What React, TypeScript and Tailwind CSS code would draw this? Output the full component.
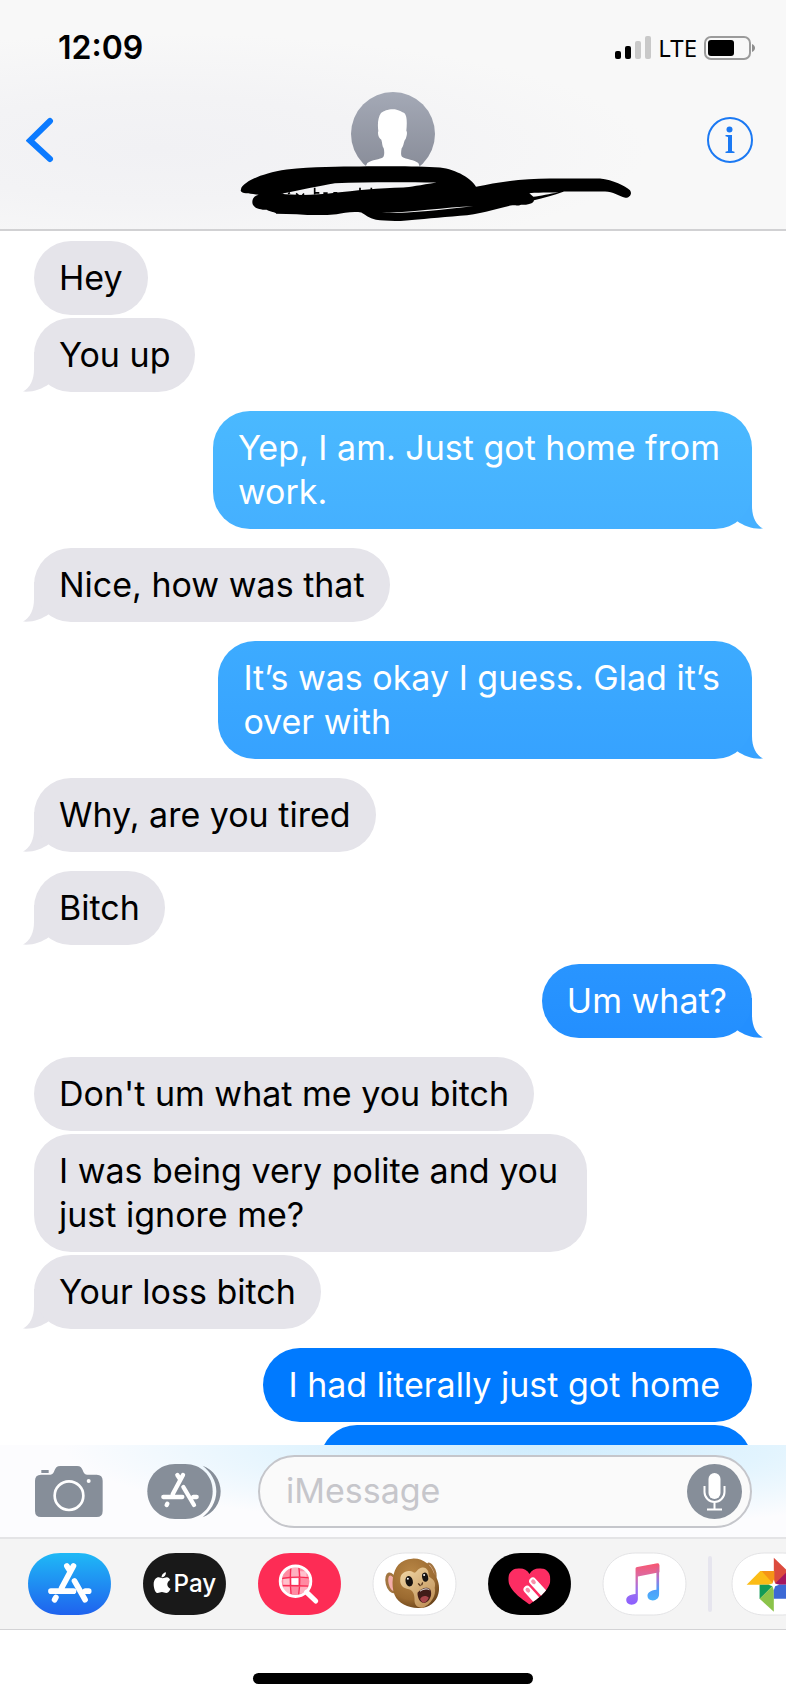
import type { ReactNode } from "react";

type Message = {
  text: string;
  from: "them" | "me";
  tail?: boolean;
  wide?: boolean;
  fill?: string;
  tailColor?: string;
};

const messages: Message[] = [
  { from: "them", text: "Hey" },
  { from: "them", text: "You up", tail: true },
  {
    from: "me",
    text: "Yep, I am. Just got home from\nwork.",
    tail: true,
    wide: true,
    fill: "bg-linear-to-b from-[#4ab9ff] to-[#45b0ff]",
    tailColor: "text-[#45b0ff]",
  },
  { from: "them", text: "Nice, how was that", tail: true },
  {
    from: "me",
    text: "It’s was okay I guess. Glad it’s\nover with",
    tail: true,
    wide: true,
    fill: "bg-linear-to-b from-[#3dabff] to-[#36a2ff]",
    tailColor: "text-[#36a2ff]",
  },
  { from: "them", text: "Why, are you tired", tail: true },
  { from: "them", text: "Bitch", tail: true },
  {
    from: "me",
    text: "Um what?",
    tail: true,
    fill: "bg-linear-to-b from-[#2995ff] to-[#238fff]",
    tailColor: "text-[#238fff]",
  },
  { from: "them", text: "Don't um what me you bitch" },
  { from: "them", text: "I was being very polite and you just ignore me?" },
  { from: "them", text: "Your loss bitch", tail: true },
  { from: "me", text: "I had literally just got home", wide: true, fill: "bg-[#007aff]" },
  { from: "me", text: "", fill: "bg-[#007aff]" },
];

function Bubble({ message, first }: { message: Message; first: boolean }) {
  const mine = message.from === "me";
  const color = mine ? `${message.fill} text-white` : "bg-[#e5e4ea] text-black";
  const width = message.text ? "" : "w-[432px]";
  const padding = message.wide ? "pr-8" : "pr-[25px]";
  return (
    <li className={`flex shrink-0 ${mine ? "justify-end" : "justify-start"} ${first ? "mt-[19px]" : "mt-[3px]"}`}>
      <div className="relative isolate flex max-w-[77%]">
        {message.tail && (
          <svg
            viewBox="0 0 40 40"
            aria-hidden="true"
            className={`absolute bottom-0 -z-10 size-10 ${
              mine ? `-right-[11px] -scale-x-100 ${message.tailColor}` : "-left-[11px] text-[#e5e4ea]"
            }`}
          >
            <path fill="currentColor" d="M11 0V17C11 28 7 36 0 39.6C10 40.4 19 37 26 32L34 20V0Z" />
          </svg>
        )}
        <p
          className={`min-h-[74px] rounded-[37px] py-[15px] pl-[25px] text-[34px] leading-[44px] whitespace-pre-line ${padding} ${color} ${width}`}
        >
          {message.text}
        </p>
      </div>
    </li>
  );
}

function StatusBar() {
  return (
    <div className="flex items-center justify-between pr-[30px] pl-[58px] pt-7">
      <span className="text-[32px] leading-10 font-semibold">12:09</span>
      <div className="flex items-center gap-[7px]">
        <svg width="36" height="24" viewBox="0 0 36 24" aria-label="Signal">
          <rect x="0" y="15" width="6" height="8" rx="2" />
          <rect x="10" y="10" width="6" height="13" rx="2" />
          <rect x="20" y="5" width="6" height="18" rx="2" fill="#c9c9c9" />
          <rect x="30" y="0" width="6" height="23" rx="2" fill="#c9c9c9" />
        </svg>
        <span className="font-['Noto_Sans',sans-serif] text-[24px] leading-8">LTE</span>
        <svg width="52" height="24" viewBox="0 0 52 24" aria-label="Battery">
          <rect x="1" y="1" width="45" height="22" rx="6" fill="none" stroke="#9b9b9b" strokeWidth="2" />
          <rect x="4" y="4" width="26" height="16" rx="3" />
          <path d="M48 8c4 1.500 4 6.500 0 8z" fill="#8e8e8e" />
        </svg>
      </div>
    </div>
  );
}

function Avatar() {
  return (
    <svg width="84" height="84" viewBox="392 35 252 252" aria-label="Contact photo">
      <defs>
        <linearGradient id="avatar" x1="0" y1="0" x2="0" y2="1">
          <stop offset="0" stopColor="#a4a9b6" />
          <stop offset="1" stopColor="#868a96" />
        </linearGradient>
        <clipPath id="avatar-clip">
          <circle cx="518" cy="161" r="126" />
        </clipPath>
      </defs>
      <circle cx="518" cy="161" r="126" fill="url(#avatar)" />
      <path
        clipPath="url(#avatar-clip)"
        fill="#fff"
        d="M518 87C534 87 543 95 552 98C561 106 560 132 558 151C562 156 559 168 556 176C550 181 551 196 544 204C542 214 541 224 545 229C558 237 582 238 594 248L610 290H420L441 248C454 238 480 238 489 230C493 222 492 212 490 204C485 198 486 186 483 178C475 174 471 160 474 152C471 132 473 110 482 98C491 92 501 87 518 87Z"
      />
    </svg>
  );
}

function Scribble() {
  return (
    <svg
      viewBox="60 255 1176 170"
      aria-hidden="true"
      className="absolute top-[73px] left-1/2 h-[57px] w-[392px] max-w-none -translate-x-[153px]"
    >
      <path
        fillRule="evenodd"
        d="M64 323C76 304 120 280 200 268C280 259 360 259 420 259C520 258 600 258 660 262C710 268 756 296 768 320C840 304 920 294 1000 295H1140C1180 299 1215 318 1230 330C1238 342 1228 354 1216 353C1195 346 1180 335 1155 334H1032C1000 346 970 354 942 360C940 370 925 374 903 374C895 379 890 373 872 376C820 388 780 402 720 407C660 412 600 418 560 421C520 425 490 421 468 419C448 414 432 402 424 397C400 393 370 398 350 402C310 406 270 405 230 402L168 401C170 396 150 396 140 389C120 388 104 385 98 372C94 358 102 347 116 344C90 340 66 342 62 332ZM182 341C240 330 300 316 345 309C440 305 560 306 650 307C600 315 570 321 550 322C480 323 400 332 345 338C290 345 230 346 182 341ZM470 398C560 401 650 390 760 378C680 380 570 398 470 398ZM940 350C960 348 990 340 1016 337C990 337 960 336 928 339Z"
      />
      <path
        d="M182 342h8M204 341l6-3M228 340l7 5M252 340l-5 6M284 323v20M286 338h12M310 339h13M340 338h12M420 323v12M454 323v10"
        fill="none"
        stroke="#000"
        strokeWidth="5"
      />
    </svg>
  );
}

function Header() {
  return (
    <header className="shrink-0 border-b-2 border-[#d1d1d3] bg-[#f8f8f8] bg-[radial-gradient(ellipse_at_20%_65%,#f1f1f4_0%,#f3f3f5_25%,#f8f8f8_55%)]">
      <StatusBar />
      <div className="flex h-[161px] items-start justify-between pr-[33px] pl-[26px] pt-6">
        <button type="button" aria-label="Back" className="mt-[25px] w-[53px]">
          <svg width="28" height="46" viewBox="0 0 28 46">
            <path
              d="M24 4L4 23.500L24 42"
              fill="none"
              stroke="#0b7aff"
              strokeWidth="6"
              strokeLinecap="round"
              strokeLinejoin="miter"
            />
          </svg>
        </button>
        <div className="relative">
          <Avatar />
          <Scribble />
        </div>
        <button type="button" aria-label="Details" className="mt-[25px]">
          <svg width="46" height="46" viewBox="0 0 46 46" fill="#1b79f3">
            <circle cx="23" cy="23" r="22" fill="none" stroke="#1b79f3" strokeWidth="2" />
            <circle cx="22.500" cy="12.500" r="3" />
            <path d="M18.500 18h6.500v16l2.500 .8V36h-9v-1.200l2.500-.8V20l-2.500-.7z" />
          </svg>
        </button>
      </div>
    </header>
  );
}

function CameraIcon() {
  return (
    <svg width="68" height="51" viewBox="106 108 204 153" fill="#868e99">
      <rect x="125" y="120" width="22" height="9" />
      <path d="M124 134H152C168 134 160 108 182 108H232C254 108 246 134 262 134H291Q309 134 309 152V243Q309 261 291 261H124Q106 261 106 243V152Q106 134 124 134Z" />
      <circle cx="208" cy="197" r="43" fill="none" stroke="#fff" strokeWidth="8" />
      <circle cx="267" cy="153" r="6" fill="#fff" />
    </svg>
  );
}

function AppsIcon() {
  return (
    <svg width="74" height="55" viewBox="441 102 222 165" fill="#868e99">
      <path d="M608 107C640 118 662 150 662 184C662 220 640 250 608 262C630 244 649 218 649 184C649 152 632 126 608 107Z" />
      <path d="M442 184C442 136 480 102 525 102H556C602 102 638 136 638 184C638 232 602 267 556 267H525C480 267 442 232 442 184Z" />
      <g stroke="#fff" strokeWidth="13" strokeLinecap="round" fill="none">
        <path d="M532 135L541 149M549 135L518 193M490 201H547M580 201H590M502 221L500 225M550 171L582 225" />
      </g>
    </svg>
  );
}

function Composer() {
  return (
    <form
      className="flex h-[92px] shrink-0 items-center bg-[#fcfcfe] bg-[radial-gradient(ellipse_60%_90%_at_68%_0%,#cfecfd_0%,#e2f4fe_50%,rgba(247,252,255,0)_100%)] pr-[34px] pl-[35px]"
      onSubmit={(event) => event.preventDefault()}
    >
      <button type="button" aria-label="Camera">
        <CameraIcon />
      </button>
      <button type="button" aria-label="Apps" className="ml-11">
        <AppsIcon />
      </button>
      <div className="ml-[37px] flex h-[73px] min-w-0 flex-1 items-center rounded-full border-2 border-[#c5c6cb] bg-[#fafafa] pr-2 pl-[26px]">
        <input
          type="text"
          aria-label="Message"
          placeholder="iMessage"
          className="min-w-0 flex-1 bg-transparent text-[34px] leading-[44px] outline-none placeholder:text-[#c6c6cb]"
        />
        <button type="button" aria-label="Dictate">
          <svg width="55" height="55" viewBox="0 0 55 55">
            <circle cx="27.500" cy="27.500" r="27.500" fill="#868e99" />
            <rect x="21.500" y="9" width="12" height="26" rx="6" fill="#fff" />
            <path d="M17.500 22v6a10 10 0 0 0 20 0v-6M27.500 38v7.500M20 45.500h15" fill="none" stroke="#fff" strokeWidth="2" />
          </svg>
        </button>
      </div>
    </form>
  );
}

function AppPill({ label, fill, outlined, children }: { label: string; fill: string; outlined?: boolean; children: ReactNode }) {
  return (
    <button type="button" aria-label={label} className="shrink-0">
      <svg width="83" height="62" viewBox="0 0 250 187" className="overflow-visible">
        <path
          d="M0 93C0 38 42 0 98 0H152C208 0 250 38 250 93C250 149 208 187 152 187H98C42 187 0 149 0 93Z"
          fill={fill}
          stroke={outlined ? "#e3e3e5" : "none"}
          strokeWidth="3"
        />
        {children}
      </svg>
    </button>
  );
}

function AppStoreMark() {
  return (
    <>
      <defs>
        <linearGradient id="store" x1="0" y1="0" x2="0" y2="1">
          <stop offset="0" stopColor="#1fb9f6" />
          <stop offset="1" stopColor="#1f62ee" />
        </linearGradient>
      </defs>
      <g stroke="#fff" strokeWidth="17" strokeLinecap="round" fill="none">
        <path d="M117 39L126 54M137 39L101 106M69 115H137M173 115H183M84 134L80 141M140 84L172 141" />
      </g>
    </>
  );
}

function ApplePayMark() {
  return (
    <>
      <path
        fill="#fff"
        d="M69 60C69 66 64 73 56 74C55 66 62 59 69 58ZM80 83C70 89 71 103 83 108C80 116 74 121 70 121C65 121 62 118 57 118C52 118 49 121 44 121C37 121 32 106 32 94C32 80 40 73 47 73C52 73 56 76 59 76C63 76 67 73 72 73C76 73 80 76 81 80Z"
      />
      <text x="92" y="118" fill="#fff" fontSize="73" fontWeight="500" className="font-[Inter,sans-serif]">
        Pay
      </text>
    </>
  );
}

function ImagesMark() {
  return (
    <>
      <defs>
        <clipPath id="lens">
          <circle cx="113" cy="85" r="42" />
        </clipPath>
      </defs>
      <g clipPath="url(#lens)">
        <rect x="70" y="42" width="86" height="86" fill="#ff8ba2" />
        <path fill="#ffc0cc" d="M76 78h22v20h-22zM124 55h22v20h-22zM76 101h22v22h-22z" />
        <path fill="#ffb0bf" d="M100 42h22v32h-22zM125 100h24v22h-24z" />
        <rect x="101" y="76" width="20" height="20" fill="#fff" />
        <path d="M99 42Q95 85 100 128M123 42Q129 85 122 128M70 77Q113 70 156 75M70 98Q113 98 156 100" stroke="#f92c54" strokeWidth="4" fill="none" />
      </g>
      <circle cx="113" cy="85" r="46" fill="none" stroke="#fff" strokeWidth="9" />
      <path d="M146 118L174 145" stroke="#fff" strokeWidth="15" strokeLinecap="round" />
    </>
  );
}

function MonkeyMark() {
  return (
    <>
      <defs>
        <radialGradient id="fur" cx="0.400" cy="0.300" r="0.750">
          <stop offset="0" stopColor="#b98746" />
          <stop offset="0.700" stopColor="#9b6a30" />
          <stop offset="1" stopColor="#69431b" />
        </radialGradient>
        <linearGradient id="face" x1="0" y1="0" x2="0.700" y2="1">
          <stop offset="0" stopColor="#f3d9a8" />
          <stop offset="1" stopColor="#c1935a" />
        </linearGradient>
      </defs>
      <g transform="translate(-40 -37)">
        <ellipse cx="95" cy="127" rx="17" ry="32" transform="rotate(-14 95 127)" fill="#a27540" />
        <ellipse cx="97" cy="128" rx="10" ry="24" transform="rotate(-14 97 128)" fill="#f4adaa" />
        <ellipse cx="216" cy="92" rx="13" ry="28" transform="rotate(-22 216 92)" fill="#a27540" />
        <ellipse cx="216" cy="92" rx="6" ry="21" transform="rotate(-22 216 92)" fill="#e5b598" />
        <path
          fill="url(#fur)"
          d="M158 54C190 51 216 74 223 97C236 115 243 137 237 160C231 185 207 204 180 203C150 205 116 190 105 164C93 132 99 92 117 72C127 61 141 55 158 54Z"
        />
        <path
          fill="url(#face)"
          d="M122 116C122 98 143 84 163 96C171 99 172 84 188 81C203 79 209 93 208 108C220 115 231 124 226 142C232 165 213 194 190 202C173 203 164 194 165 176C165 160 160 150 148 146C130 144 120 132 122 116Z"
        />
        <ellipse cx="149" cy="122" rx="11" ry="16" transform="rotate(-12 149 122)" fill="#171311" />
        <ellipse cx="197" cy="110" rx="9" ry="14" transform="rotate(-12 197 110)" fill="#171311" />
        <circle cx="145" cy="115" r="3" fill="#fff" />
        <circle cx="194" cy="103" r="3" fill="#fff" />
        <path d="M177 130l5 5M189 127l-2 6" stroke="#54341b" strokeWidth="4" strokeLinecap="round" />
        <path fill="#401c18" d="M174 157C186 143 203 136 213 148C220 164 210 184 195 188C180 188 174 171 174 157Z" />
        <path fill="#a8464a" d="M182 176C187 164 202 164 208 172C204 183 197 187 192 187C187 186 184 181 182 176Z" />
        <path d="M182 152C192 145 202 143 210 148" stroke="#fff" strokeWidth="3" fill="none" />
      </g>
    </>
  );
}

function HeartMark() {
  return (
    <>
      <defs>
        <clipPath id="heart">
          <path d="M125 155C100 137 61 111 61 79C61 55 79 46 93 46C108 46 119 52 125 63C131 52 142 46 157 46C171 46 188 55 188 79C188 111 151 137 125 155Z" />
        </clipPath>
      </defs>
      <g clipPath="url(#heart)">
        <path fill="#fc2d63" d="M50 36h150v130h-150z" />
        <path d="M135 85L180 134M118 110L160 157" stroke="#fff" strokeWidth="22" strokeLinecap="round" />
        <ellipse cx="137" cy="87" rx="8" ry="6" transform="rotate(47 137 87)" fill="#f692ab" />
        <ellipse cx="120" cy="112" rx="8" ry="6" transform="rotate(47 120 112)" fill="#f692ab" />
      </g>
    </>
  );
}

function MusicMark() {
  return (
    <>
      <defs>
        <linearGradient id="note" x1="0" y1="0" x2="0" y2="1">
          <stop offset="0" stopColor="#f9566f" />
          <stop offset="0.300" stopColor="#dc6aa2" />
          <stop offset="0.650" stopColor="#9b72ee" />
          <stop offset="1" stopColor="#8c5eff" />
        </linearGradient>
        <linearGradient id="note-stem" x1="0" y1="0" x2="0" y2="1">
          <stop offset="0" stopColor="#f9566f" />
          <stop offset="0.400" stopColor="#a874d6" />
          <stop offset="0.700" stopColor="#4d9dfa" />
          <stop offset="1" stopColor="#4bb1fa" />
        </linearGradient>
      </defs>
      <path
        fill="url(#note)"
        d="M98 47Q98 43 103 42L164 31Q170 31 170 37V58L105 71V138C105 149 97 156 86 156C76 156 70 150 70 142C70 132 79 126 98 124Z"
      />
      <path
        fill="url(#note-stem)"
        d="M161 33H164Q169 31 169 37V124C169 136 161 143 150 143C140 143 134 138 134 130C134 120 142 113 161 111Z"
      />
    </>
  );
}

function PhotosMark() {
  return (
    <g transform="translate(-1115 -37)">
      <path fill="#dc4b3e" d="M1241 51L1282 91V105L1241 133Z" />
      <path fill="#a5175f" d="M1241 133L1282 92V133Z" />
      <path fill="#fbbc16" d="M1159 133L1200 91H1242V133Z" />
      <path fill="#f59416" d="M1204 91H1242V133Z" />
      <path fill="#139b57" d="M1198 133H1241L1198 176Z" />
      <path fill="#8bc34a" d="M1198 175L1241 133V214Z" />
      <path fill="#3c69d5" d="M1241 133H1322L1281 175H1241Z" />
      <path fill="#fff" d="M1241 117L1245 129L1257 133L1245 137L1241 149L1237 137L1225 133L1237 129Z" />
    </g>
  );
}

function AppStrip() {
  return (
    <nav
      aria-label="iMessage apps"
      className="flex h-[93px] shrink-0 items-center gap-8 overflow-hidden border-t-2 border-b border-t-[#e4e4e6] border-b-[#d3d3d5] bg-[#f4f4f4] pl-7"
    >
      <AppPill label="App Store" fill="url(#store)">
        <AppStoreMark />
      </AppPill>
      <AppPill label="Apple Pay" fill="#191919">
        <ApplePayMark />
      </AppPill>
      <AppPill label="Images" fill="#fd2c55">
        <ImagesMark />
      </AppPill>
      <AppPill label="Animoji" fill="#fff" outlined>
        <MonkeyMark />
      </AppPill>
      <AppPill label="Digital Touch" fill="#000">
        <HeartMark />
      </AppPill>
      <AppPill label="Music" fill="#fff" outlined>
        <MusicMark />
      </AppPill>
      <div className="-ml-2.5 flex shrink-0 items-center gap-5">
        <div className="h-14 w-1 rounded-full bg-[#e6e5ee]" />
        <AppPill label="Google Photos" fill="#fff" outlined>
          <PhotosMark />
        </AppPill>
      </div>
    </nav>
  );
}

export default function App() {
  return (
    <div className="flex h-screen flex-col bg-white font-[Inter,'Liberation_Sans',sans-serif] text-black">
      <Header />
      <main className="min-h-0 flex-1 overflow-hidden">
        <ul className="flex flex-col px-[34px] pt-[7px]">
          {messages.map((message, index) => {
            const previous = messages[index - 1];
            const first = index > 0 && (previous.from !== message.from || Boolean(previous.tail));
            return <Bubble key={index} message={message} first={first} />;
          })}
        </ul>
      </main>
      <Composer />
      <AppStrip />
      <footer className="flex h-[71px] shrink-0 items-end justify-center bg-white pb-[17px]">
        <div className="h-[11px] w-[280px] rounded-full bg-black" />
      </footer>
    </div>
  );
}
